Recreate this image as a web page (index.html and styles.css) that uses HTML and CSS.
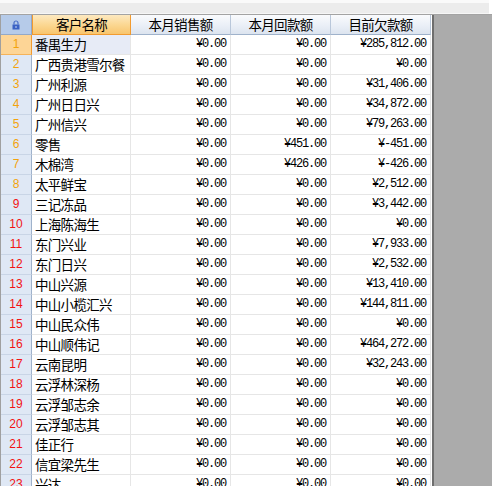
FILE: index.html
```html
<!DOCTYPE html>
<html lang="zh">
<head>
<meta charset="utf-8">
<title>客户欠款</title>
<link rel="stylesheet" href="styles.css">
</head>
<body>
<div class="topbar"></div>
<div class="main">
  <div class="grid">
    <div class="row head">
      <div class="cell corner">
        <svg width="8" height="10" viewBox="0 0 8 10"><path d="M2 4.5V3a2 2 0 0 1 4 0v1.5" fill="none" stroke="#4a6fc8" stroke-width="1.2"/><rect x="0.5" y="4.5" width="7" height="5" fill="#3b62c4"/><rect x="3.5" y="6" width="1" height="2" fill="#c8d6f2"/></svg>
      </div>
      <div class="cell hcell sel">客户名称</div>
      <div class="cell hcell">本月销售额</div>
      <div class="cell hcell">本月回款额</div>
      <div class="cell hcell">目前欠款额</div>
    </div>
    <div id="rows"></div>
  </div>
  <div class="side"></div>
</div>
<script src="app.js"></script>
</body>
</html>
```
FILE: app.js
```js
var data = [
  ["番禺生力","¥0.00","¥0.00","¥285,812.00"],
  ["广西贵港雪尔餐","¥0.00","¥0.00","¥0.00"],
  ["广州利源","¥0.00","¥0.00","¥31,406.00"],
  ["广州日日兴","¥0.00","¥0.00","¥34,872.00"],
  ["广州信兴","¥0.00","¥0.00","¥79,263.00"],
  ["零售","¥0.00","¥451.00","¥-451.00"],
  ["木棉湾","¥0.00","¥426.00","¥-426.00"],
  ["太平鲜宝","¥0.00","¥0.00","¥2,512.00"],
  ["三记冻品","¥0.00","¥0.00","¥3,442.00"],
  ["上海陈海生","¥0.00","¥0.00","¥0.00"],
  ["东门兴业","¥0.00","¥0.00","¥7,933.00"],
  ["东门日兴","¥0.00","¥0.00","¥2,532.00"],
  ["中山兴源","¥0.00","¥0.00","¥13,410.00"],
  ["中山小榄汇兴","¥0.00","¥0.00","¥144,811.00"],
  ["中山民众伟","¥0.00","¥0.00","¥0.00"],
  ["中山顺伟记","¥0.00","¥0.00","¥464,272.00"],
  ["云南昆明","¥0.00","¥0.00","¥32,243.00"],
  ["云浮林深杨","¥0.00","¥0.00","¥0.00"],
  ["云浮邹志余","¥0.00","¥0.00","¥0.00"],
  ["云浮邹志其","¥0.00","¥0.00","¥0.00"],
  ["佳正行","¥0.00","¥0.00","¥0.00"],
  ["信宜梁先生","¥0.00","¥0.00","¥0.00"],
  ["兴达","¥0.00","¥0.00","¥0.00"]
];
var host = document.getElementById("rows");
data.forEach(function (r, i) {
  var row = document.createElement("div");
  row.className = "row" + (i === 0 ? " current" : "");
  var num = document.createElement("div");
  num.className = "cell num " + (i < 8 ? "orange" : "red");
  num.textContent = i + 1;
  row.appendChild(num);
  var name = document.createElement("div");
  name.className = "cell name";
  name.textContent = r[0];
  row.appendChild(name);
  for (var k = 1; k < 4; k++) {
    var c = document.createElement("div");
    c.className = "cell money";
    c.textContent = r[k];
    row.appendChild(c);
  }
  host.appendChild(row);
});
```
FILE: styles.css
```css
* { box-sizing: border-box; }
html, body { margin: 0; padding: 0; height: 100%; overflow: hidden; background: #ffffff; }
body { font-family: "Noto Sans CJK SC", sans-serif; font-size: 13px; color: #000; }

.topbar {
  height: 14px;
  background: #ececec;
  border-top: 3px solid #fafafa;
  border-bottom: 1px solid #f6f6f6;
  margin-right: 3px;
}

.main { display: flex; height: 472px; border-top: 1px solid #a3a3a3; }
.grid { width: 432px; border-left: 1px solid #a0a0a0; flex: none; }
.side { flex: 1; background: #ababab; border-left: 2px solid #6e6e6e; }

.row {
  display: grid;
  grid-template-columns: 31px 99px 100px 100px 100px;
  height: 20px;
}
.cell {
  border-right: 1px solid #e6e6e6;
  border-bottom: 1px solid #e6e6e6;
  display: flex;
  align-items: center;
  white-space: nowrap;
  overflow: hidden;
  line-height: 17px;
}

.head { height: 20px; }
.corner {
  background: #b6cbe9;
  border-right: 1px solid #93a9c8;
  border-bottom: 1px solid #93a9c8;
  justify-content: center;
}
.hcell {
  justify-content: center;
  background: linear-gradient(#fafbfd, #e9eef6 60%, #dce4ef);
  border-right: 1px solid #b9c7da;
  border-bottom: 1px solid #9fb2cb;
  letter-spacing: -0.7px;
  font-size: 13.5px;
  padding-bottom: 1px;
}
.hcell.sel {
  background: linear-gradient(#fde9c0, #fbd68f 55%, #f8c56e);
  border: 1px solid #f29b30;
  border-top: none;
}

.num {
  justify-content: center;
  background: #dfe8f5;
  border-right: 1px solid #9fb2cb;
  border-bottom: 1px solid #c9d5e6;
  font-family: "Liberation Sans", sans-serif;
  font-size: 12px;
}
.num.orange { color: #f3a30c; }
.num.red { color: #f21313; }
.current .num { background: #fdd596; border-right-color: #f29b30; border-bottom-color: #f5b35a; }
.current .name { background: #e7ebf6; }

.name { padding-left: 3px; padding-bottom: 1px; letter-spacing: -0.7px; font-size: 13.5px; }
.money {
  justify-content: flex-end;
  padding-right: 4px;
  font-family: "Liberation Mono", monospace;
  font-size: 12px;
  letter-spacing: -1.2px;
}
```
